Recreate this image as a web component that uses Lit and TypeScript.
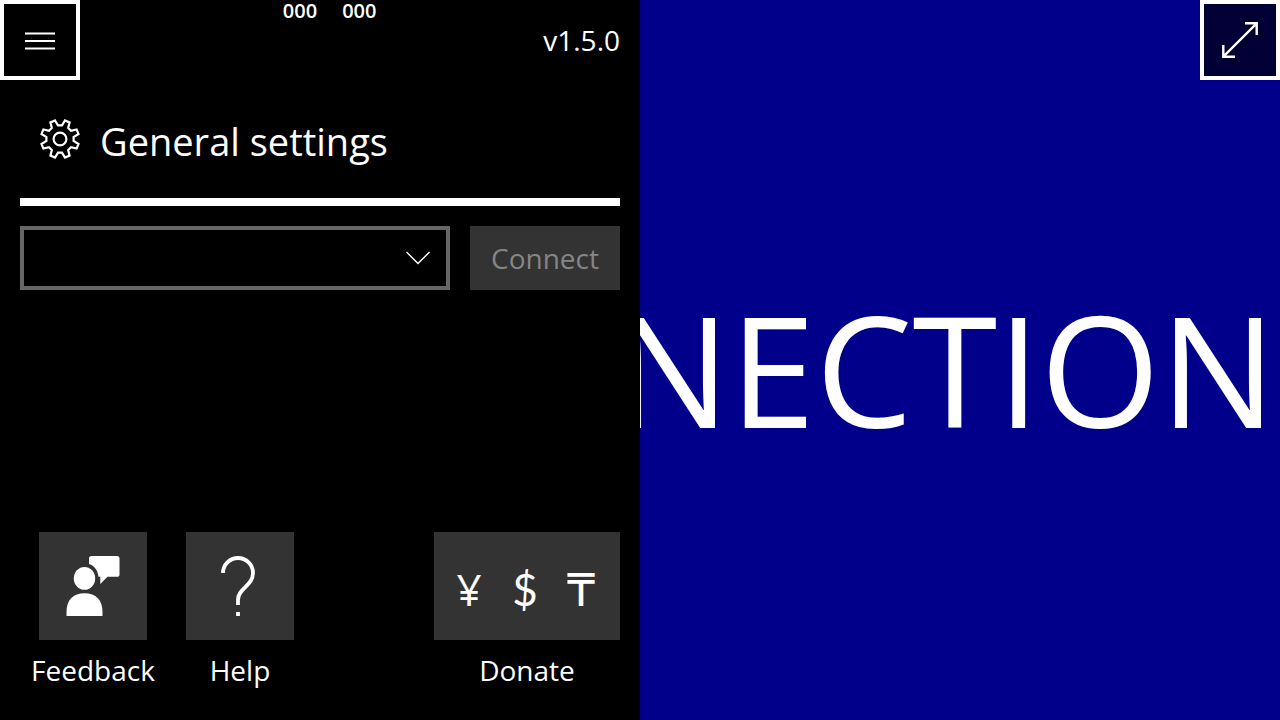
import { LitElement, html, css, svg } from "lit";
import { customElement } from "lit/decorators.js";

const gearPoints = (): string => {
  const notch = [[-5, -18.5], [-2, -13.6], [2, -13.6], [5, -18.5]];
  const points: string[] = [];
  for (let i = 0; i < 8; i++) {
    const a = (i * Math.PI) / 4;
    for (const [x, y] of notch) {
      const px = 20 + x * Math.cos(a) - y * Math.sin(a);
      const py = 20 + x * Math.sin(a) + y * Math.cos(a);
      points.push(`${px.toFixed(2)},${py.toFixed(2)}`);
    }
  }
  return points.join(" ");
};

const gear = svg`<polygon points=${gearPoints()} /><circle cx="20" cy="20" r="6.4" />`;

@customElement("app-root")
export class AppRoot extends LitElement {
  static styles = css`
    :host {
      display: grid;
      grid-template-columns: 1fr 1fr;
      min-height: 100vh;
      font-family: "Open Sans", "Noto Sans", sans-serif;
      font-size: 28px;
      line-height: 40px;
      color: #fff;
      background: #000;
    }
    * {
      box-sizing: border-box;
    }
    button,
    select {
      font: inherit;
      color: inherit;
      margin: 0;
      padding: 0;
      border: 0;
      border-radius: 0;
    }
    svg {
      display: block;
      fill: none;
      stroke: #fff;
    }
    .panel {
      display: flex;
      flex-direction: column;
      min-width: 0;
    }
    .top {
      display: flex;
      align-items: flex-start;
      height: 80px;
      padding-right: 20px;
    }
    .square {
      width: 80px;
      height: 80px;
      border: 4px solid #fff;
      background: rgba(0, 0, 0, 0.6);
    }
    .counters {
      flex: 1;
      display: flex;
      justify-content: center;
      gap: 25px;
      padding-left: 36px;
      font-size: 20px;
      font-weight: 600;
      line-height: 22px;
    }
    .version {
      align-self: center;
    }
    .heading {
      display: flex;
      align-items: center;
      gap: 20px;
      margin: 0;
      padding: 30px 40px;
      font-size: 38px;
      font-weight: 400;
      line-height: 54px;
    }
    .heading span {
      padding-top: 4px;
    }
    .rule {
      height: 8px;
      margin: 0 20px;
      border: 0;
      background: #fff;
    }
    .connection {
      display: flex;
      gap: 20px;
      padding: 20px;
    }
    .picker {
      flex: 1;
      display: grid;
    }
    .picker > * {
      grid-area: 1 / 1;
    }
    .picker select {
      appearance: none;
      width: 100%;
      height: 64px;
      padding: 0 60px 0 16px;
      border: 4px solid #666;
      background: #000;
    }
    .picker svg {
      place-self: center end;
      margin-right: 19px;
      pointer-events: none;
    }
    .connect {
      width: 150px;
      height: 64px;
      background: #333;
      color: #858585;
    }
    .actions {
      display: flex;
      gap: 1px;
      margin-top: auto;
      padding: 20px 20px 30px;
    }
    .action {
      display: flex;
      flex-direction: column;
      align-items: center;
      gap: 10px;
      width: 146px;
    }
    .donate {
      width: 186px;
      margin-left: auto;
    }
    .tile {
      width: 108px;
      height: 108px;
      background: #333;
    }
    .wide {
      display: grid;
      grid-template-columns: repeat(3, 1fr);
      align-items: baseline;
      align-content: center;
      width: 100%;
      padding: 8px 11px 0 7px;
      font-size: 44px;
    }
    .dollar {
      font-family: "Lato", sans-serif;
    }
    .tenge {
      font-family: "DejaVu Sans", sans-serif;
    }
    .solid {
      fill: #fff;
      stroke: none;
    }
    .screen {
      display: flex;
      align-items: center;
      justify-content: flex-end;
      min-width: 0;
      position: relative;
      overflow: hidden;
      padding: 16px 4px 0 0;
      background: #00008b;
    }
    .expand {
      position: absolute;
      top: 0;
      right: 0;
    }
    .status {
      margin: 0;
      flex: none;
      font-size: 154px;
      line-height: 212px;
      white-space: nowrap;
    }
  `;

  render() {
    return html`
      <main class="panel">
        <header class="top">
          <button class="square" aria-label="Menu">
            <svg width="72" height="72" viewBox="4 4 72 72" stroke-width="2">
              <path d="M25 33.5h30M25 41h30M25 48.5h30" />
            </svg>
          </button>
          <div class="counters"><span>000</span><span>000</span></div>
          <span class="version">v1.5.0</span>
        </header>
        <h1 class="heading">
          <svg width="40" height="40" viewBox="0 0 40 40" stroke-width="2.2">${gear}</svg>
          <span>General settings</span>
        </h1>
        <hr class="rule" />
        <div class="connection">
          <div class="picker">
            <select aria-label="Device"><option></option></select>
            <svg width="26" height="16" viewBox="0 0 26 16" stroke-width="1.4">
              <path d="M1.5 2l11.5 11.5L24.5 2" />
            </svg>
          </div>
          <button class="connect" disabled>Connect</button>
        </div>
        <footer class="actions">
          <div class="action">
            <button class="tile" id="feedback">
              <svg class="solid" width="108" height="108" viewBox="0 0 108 108">
                <ellipse cx="45.5" cy="46.4" rx="10.7" ry="11.4" />
                <path d="M27.5 84V80C27.5 68 34 61.2 45.5 61.2S63.5 68 63.5 80V84Z" />
                <path d="M50 26.5Q50 24 52.5 24H78Q80.5 24 80.5 26.5V42.2Q80.5 44.8 78 44.8H68.5L61.3 52V44.8H59.5C59 39 55.5 33.5 50 32Z" />
              </svg>
            </button>
            <label for="feedback">Feedback</label>
          </div>
          <div class="action">
            <button class="tile" id="help">
              <svg width="108" height="108" viewBox="0 0 108 108" stroke-width="3.8">
                <path d="M37 41a15 15 0 0 1 30 0C67 54 52 56 52 68v5M52 80v4" />
              </svg>
            </button>
            <label for="help">Help</label>
          </div>
          <div class="action donate">
            <button class="tile wide" id="donate">
              <span>¥</span><span class="dollar">$</span><span class="tenge">₸</span>
            </button>
            <label for="donate">Donate</label>
          </div>
        </footer>
      </main>
      <section class="screen">
        <p class="status">NO CONNECTION</p>
        <button class="square expand" aria-label="Full screen">
          <svg width="72" height="72" viewBox="4 4 72 72" stroke-width="2.4">
            <path d="M45 23.3H56.7V35M23.3 45V56.7H35M23.3 56.7L56.7 23.3" />
          </svg>
        </button>
      </section>
    `;
  }
}
